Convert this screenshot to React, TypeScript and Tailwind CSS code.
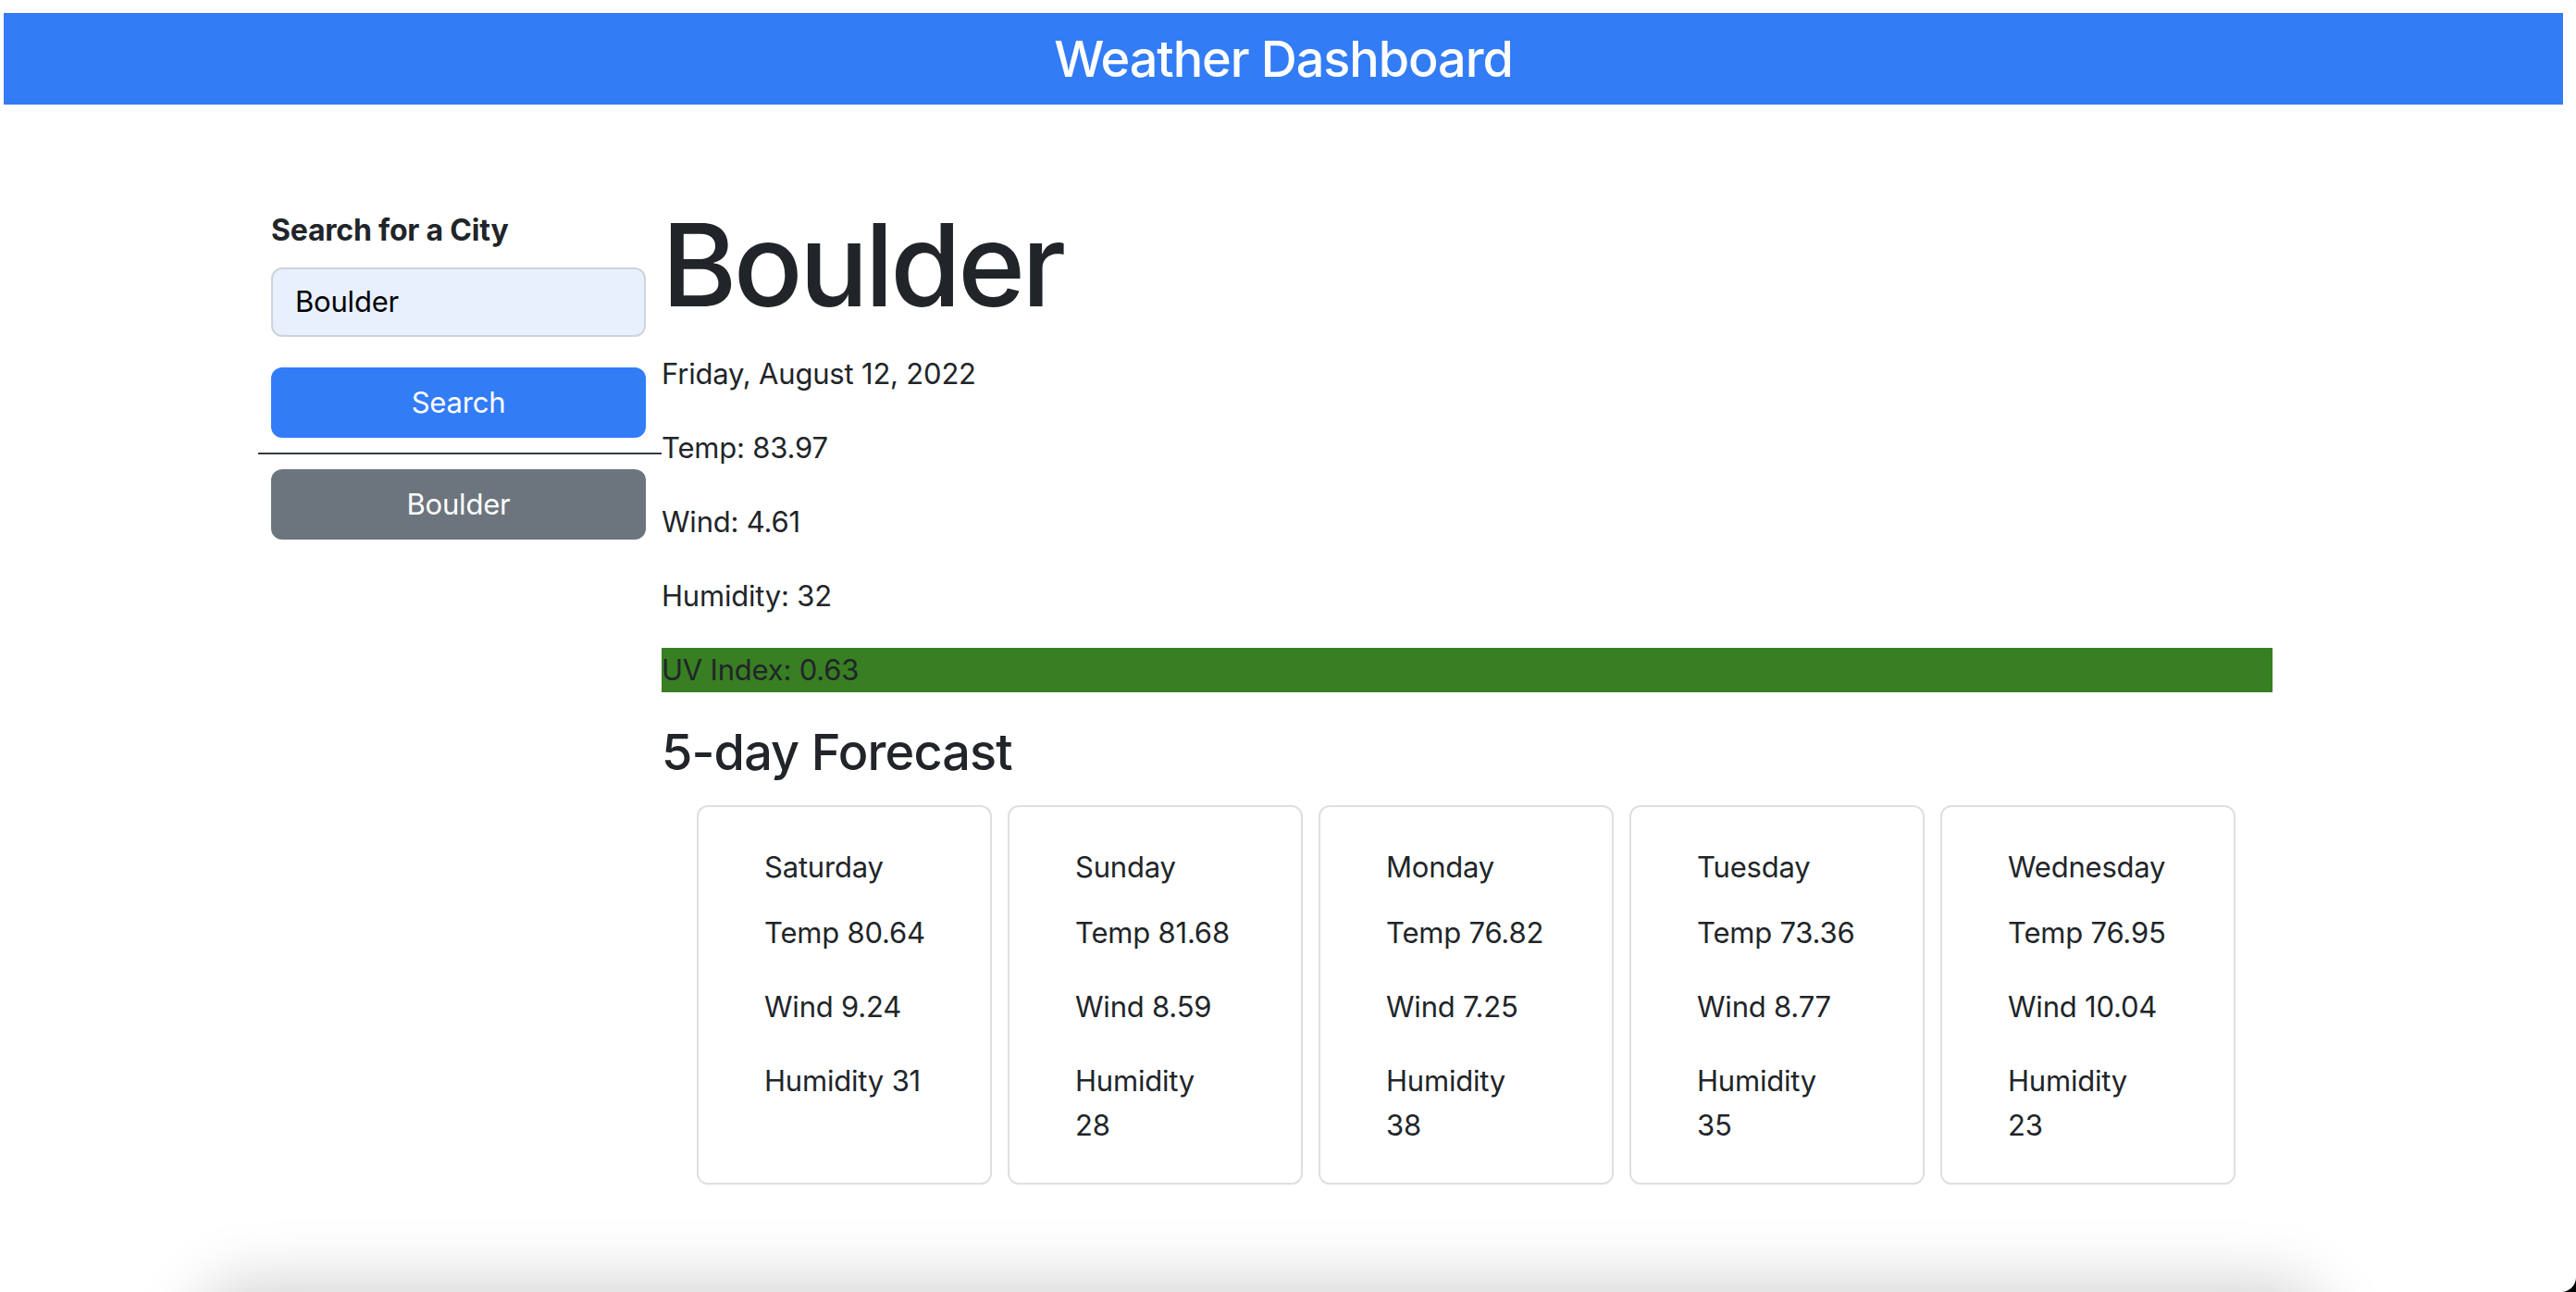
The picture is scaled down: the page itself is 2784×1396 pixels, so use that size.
import React from "react";

type Day = { name: string; temp: string; wind: string; humidity: string; wrap: boolean };

const days: Day[] = [
  { name: "Saturday", temp: "80.64", wind: "9.24", humidity: "31", wrap: false },
  { name: "Sunday", temp: "81.68", wind: "8.59", humidity: "28", wrap: true },
  { name: "Monday", temp: "76.82", wind: "7.25", humidity: "38", wrap: true },
  { name: "Tuesday", temp: "73.36", wind: "8.77", humidity: "35", wrap: true },
  { name: "Wednesday", temp: "76.95", wind: "10.04", humidity: "23", wrap: true },
];

function ForecastCard({ d }: { d: Day }) {
  return (
    <div className="w-[319px] shrink-0 border-2 border-[#dfdfdf] rounded-[12px] pl-[71px] pr-[10px] pt-[41px] pb-[6px] text-[31px] tracking-[-0.2px] leading-[48px]">
      <p className="mb-[23px]">{d.name}</p>
      <p className="mb-[32px]">Temp {d.temp}</p>
      <p className="mb-[32px]">Wind {d.wind}</p>
      <p className="mb-[32px] whitespace-nowrap">
        Humidity
        {d.wrap ? <br /> : " "}
        {d.humidity}
      </p>
    </div>
  );
}

export default function App() {
  return (
    <div className="relative w-full h-[1396px] overflow-hidden bg-white flex flex-col font-['Inter','Liberation_Sans',sans-serif] text-[#212529]">
      <header className="mt-[14px] ml-[4px] mr-[14px] h-[99px] shrink-0 bg-[#327cf6] flex items-center justify-center">
        <h1 className="text-white text-[54px] font-medium tracking-[-0.02em] leading-none">Weather Dashboard</h1>
      </header>

      <div className="mt-[99px] ml-[279px] flex shrink-0">
        <aside className="w-[436px] shrink-0 pt-[13px] flex flex-col">
          <label className="ml-[14px] mb-[16px] text-[32px] leading-[48px] font-bold tracking-[-0.2px]">Search for a City</label>
          <div className="ml-[14px] mr-[17px] h-[75px] border-2 border-[#ced4da] rounded-[12px] bg-[#e8f0fe] px-[24px] flex items-center text-[31px] tracking-[-0.2px] text-black">
            Boulder
          </div>
          <button className="ml-[14px] mr-[17px] mt-[33px] h-[76px] rounded-[12px] bg-[#327cf6] text-white text-[31px] tracking-[-0.2px]">
            Search
          </button>
          <div className="mt-[16px] h-[2px] bg-[#343a40]" />
          <button className="ml-[14px] mr-[17px] mt-[16px] h-[76px] rounded-[12px] bg-[#6c757d] text-white text-[31px] tracking-[-0.2px]">
            Boulder
          </button>
        </aside>

        <main className="w-[1741px] shrink-0 text-[31px] tracking-[-0.2px]">
          <h2 className="text-[124px] font-medium tracking-[-0.03em] leading-[1.2] mb-[19px]">Boulder</h2>
          <p className="leading-[48px] mb-[32px]">Friday, August 12, 2022</p>
          <p className="leading-[48px] mb-[32px]">Temp: 83.97</p>
          <p className="leading-[48px] mb-[32px]">Wind: 4.61</p>
          <p className="leading-[48px] mb-[32px]">Humidity: 32</p>
          <p className="leading-[48px] mb-[33px] bg-[#387e22]">UV Index: 0.63</p>
          <h3 className="text-[54px] font-medium tracking-[-0.016em] leading-[1.2] mb-[24px]">5-day Forecast</h3>
          <div className="ml-[38px] flex gap-[17px]">
            {days.map((d) => (
              <ForecastCard key={d.name} d={d} />
            ))}
          </div>
        </main>
      </div>

      <div className="flex-1" />
      <div className="shrink-0 h-[100px] mb-[-100px] ml-[220px] mr-[280px] rounded-[60px] bg-white shadow-[0_0_70px_10px_rgba(0,0,0,0.18)]" />

      <div className="absolute right-0 bottom-0 w-[16px] h-[16px] bg-black">
        <div className="w-full h-full bg-white rounded-br-[16px]" />
      </div>
    </div>
  );
}
